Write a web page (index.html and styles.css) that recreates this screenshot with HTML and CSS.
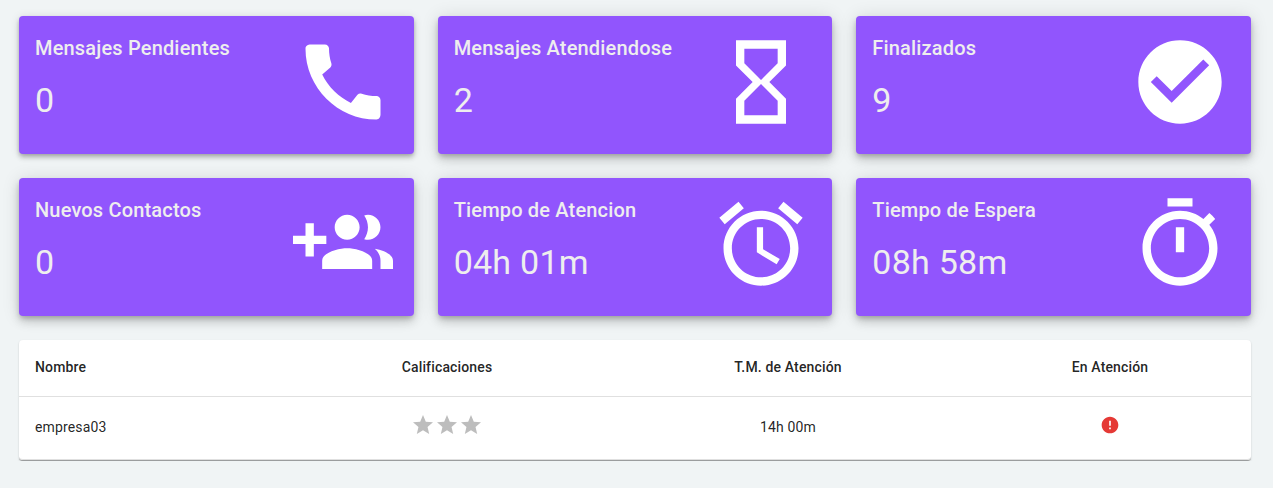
FILE: index.html
```html
<!DOCTYPE html>
<html lang="es">
<head>
<meta charset="utf-8">
<title>Panel</title>
<link rel="stylesheet" href="styles.css">
</head>
<body>
<main class="dashboard">
  <section class="cards">
    <article class="card">
      <div class="info"><h2>Mensajes Pendientes</h2><p>0</p></div>
      <svg class="icon" viewBox="0 0 24 24"><path d="M20.01 15.38c-1.23 0-2.42-.2-3.53-.56-.35-.12-.74-.03-1.01.24l-1.57 1.97c-2.83-1.35-5.48-3.9-6.89-6.83l1.95-1.66c.27-.28.35-.67.24-1.02-.37-1.11-.56-2.3-.56-3.53 0-.54-.45-.99-.99-.99H4.19C3.65 3 3 3.24 3 3.99 3 13.28 10.73 21 20.01 21c.71 0 .99-.63.99-1.18v-3.45c0-.54-.45-.99-.99-.99z"/></svg>
    </article>
    <article class="card raised">
      <div class="info"><h2>Mensajes Atendiendose</h2><p>2</p></div>
      <svg class="icon" viewBox="0 0 24 24"><path d="M6 2v6h.01L6 8.01 10 12l-4 4 .01.01H6V22h12v-5.99h-.01L18 16l-4-4 4-3.99-.01-.01H18V2H6zm10 14.5V20H8v-3.5l4-4 4 4zm-4-5l-4-4V4h8v3.5l-4 4z"/></svg>
    </article>
    <article class="card raised">
      <div class="info"><h2>Finalizados</h2><p>9</p></div>
      <svg class="icon" viewBox="0 0 24 24"><path d="M12 2C6.48 2 2 6.48 2 12s4.48 10 10 10 10-4.48 10-10S17.52 2 12 2zm-2 15l-5-5 1.41-1.41L10 14.17l7.59-7.59L19 8l-9 9z"/></svg>
    </article>
    <article class="card raised">
      <div class="info"><h2>Nuevos Contactos</h2><p>0</p></div>
      <svg class="icon" viewBox="0 0 24 24"><path d="M8 10H5V7H3v3H0v2h3v3h2v-3h3v-2zm10 1c1.66 0 2.99-1.34 2.99-3S19.66 5 18 5c-.32 0-.63.05-.91.14.57.81.9 1.79.9 2.86s-.34 2.04-.9 2.86c.28.09.59.14.91.14zm-5 0c1.66 0 2.99-1.34 2.99-3S14.66 5 13 5c-1.66 0-3 1.34-3 3s1.34 3 3 3zm6.62 2.16c.83.73 1.38 1.66 1.38 2.84v2h3v-2c0-1.54-2.37-2.49-4.38-2.84zM13 13c-2 0-6 1-6 3v2h12v-2c0-2-4-3-6-3z"/></svg>
    </article>
    <article class="card raised">
      <div class="info"><h2>Tiempo de Atencion</h2><p>04h 01m</p></div>
      <svg class="icon" viewBox="0 0 24 24"><path d="M22 5.72l-4.6-3.86-1.29 1.53 4.6 3.86L22 5.72zM7.88 3.39L6.6 1.86 2 5.71l1.29 1.53 4.59-3.85zM12.5 8H11v6l4.75 2.85.75-1.23-4-2.37V8zM12 4c-4.97 0-9 4.03-9 9s4.02 9 9 9c4.97 0 9-4.03 9-9s-4.03-9-9-9zm0 16c-3.87 0-7-3.13-7-7s3.13-7 7-7 7 3.13 7 7-3.13 7-7 7z"/></svg>
    </article>
    <article class="card raised">
      <div class="info"><h2>Tiempo de Espera</h2><p>08h 58m</p></div>
      <svg class="icon" viewBox="0 0 24 24"><path d="M15 1H9v2h6V1zm-4 13h2V8h-2v6zm8.03-6.61l1.42-1.42c-.43-.51-.9-.99-1.41-1.41l-1.42 1.42C16.07 4.74 14.12 4 12 4c-4.97 0-9 4.03-9 9s4.02 9 9 9 9-4.03 9-9c0-2.12-.74-4.07-1.97-5.61zM12 20c-3.87 0-7-3.13-7-7s3.13-7 7-7 7 3.13 7 7-3.13 7-7 7z"/></svg>
    </article>
  </section>
  <section class="panel">
    <table class="agents">
      <thead>
        <tr><th class="name">Nombre</th><th class="rating">Calificaciones</th><th class="time">T.M. de Atención</th><th class="status">En Atención</th></tr>
      </thead>
      <tbody>
        <tr>
          <td>empresa03</td>
          <td class="graphic"><div class="stars">
            <svg viewBox="0 0 24 24"><path d="M12 17.27L18.18 21l-1.64-7.03L22 9.24l-7.19-.61L12 2 9.19 8.63 2 9.24l5.46 4.73L5.82 21z"/></svg>
            <svg viewBox="0 0 24 24"><path d="M12 17.27L18.18 21l-1.64-7.03L22 9.24l-7.19-.61L12 2 9.19 8.63 2 9.24l5.46 4.73L5.82 21z"/></svg>
            <svg viewBox="0 0 24 24"><path d="M12 17.27L18.18 21l-1.64-7.03L22 9.24l-7.19-.61L12 2 9.19 8.63 2 9.24l5.46 4.73L5.82 21z"/></svg>
          </div></td>
          <td class="time">14h 00m</td>
          <td class="graphic"><svg class="alert" viewBox="0 0 24 24"><path d="M12 2C6.48 2 2 6.48 2 12s4.48 10 10 10 10-4.48 10-10S17.52 2 12 2zm1 15h-2v-2h2v2zm0-4h-2V7h2v6z"/></svg></td>
        </tr>
      </tbody>
    </table>
  </section>
</main>
</body>
</html>
```
FILE: styles.css
```css
* { box-sizing: border-box; }
body {
  margin: 0;
  background: #f0f4f5;
  font-family: Roboto, "Liberation Sans", sans-serif;
  color: rgba(0, 0, 0, 0.87);
}
.dashboard { padding: 16px 22px 0 19px; }
.cards {
  display: grid;
  grid-template-columns: repeat(3, 1fr);
  gap: 24px;
}
.card {
  height: 138px;
  padding: 16px;
  display: flex;
  justify-content: space-between;
  background: #9155fd;
  border-radius: 4px;
  color: #eee;
  box-shadow: 0 2px 4px -1px rgba(0,0,0,.2), 0 4px 5px 0 rgba(0,0,0,.14), 0 1px 10px 0 rgba(0,0,0,.12);
}
.card.raised {
  box-shadow: 0 3px 5px -1px rgba(0,0,0,.2), 0 6px 10px 0 rgba(0,0,0,.14), 0 1px 18px 0 rgba(0,0,0,.12);
}
.info h2 {
  margin: 0;
  font-size: 20px;
  font-weight: 500;
  line-height: 32px;
  letter-spacing: 0.17px;
}
.info p {
  margin: 15px 0 0;
  font-size: 34px;
  line-height: 42px;
  letter-spacing: 0.25px;
}
.icon {
  width: 100px;
  height: 100px;
  flex: none;
  fill: #fff;
  margin-right: 5px;
}
.panel {
  margin-top: 24px;
  background: #fff;
  border-bottom: 1px solid #9b9d9e;
  border-radius: 4px;
  box-shadow: 0 1px 2px 0 rgba(0,0,0,.18);
}
.agents {
  width: 100%;
  table-layout: fixed;
  border-collapse: separate;
  border-spacing: 0;
  font-size: 14px;
  letter-spacing: 0.15px;
  text-align: center;
}
.agents th {
  height: 57px;
  padding: 0 16px 2px;
  font-weight: 500;
  border-bottom: 1px solid #e0e0e0;
}
.agents td { height: 63px; padding: 0 16px 3px; border-bottom: 1px solid #e0e0e0; }
.agents td.graphic { padding-bottom: 7px; }
.agents td:first-child { border-bottom-left-radius: 4px; }
.agents td:last-child { border-bottom-right-radius: 4px; }
.agents th:first-child, .agents td:first-child { text-align: left; }
.agents .name { width: 268px; }
.agents .rating { width: 319px; padding-left: 17px; }
.agents .time { width: 363px; padding-left: 17px; }
.stars {
  display: flex;
  justify-content: center;
}
.stars svg { width: 24px; height: 24px; fill: #bdbdbd; }
.alert { width: 20px; height: 20px; display: block; margin: 0 auto; fill: #e53935; }
```
